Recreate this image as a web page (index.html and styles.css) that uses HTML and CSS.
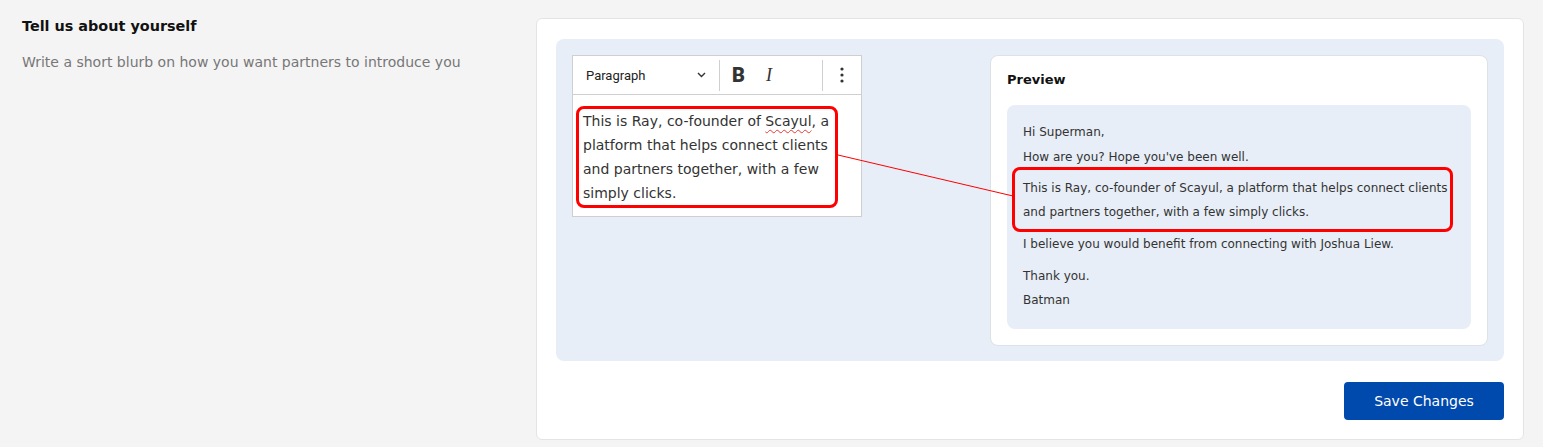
FILE: index.html
```html
<!DOCTYPE html>
<html lang="en">
<head>
<meta charset="UTF-8">
<meta name="viewport" content="width=device-width, initial-scale=1.0">
<title>Profile - Introduction</title>

<!-- CSS Styling -->
<link rel="stylesheet" href="styles.css">
</head>
<body class="profile">

<div class="page">

    <!-- Section description -->
    <div class="intro">
        <h2 class="intro-title">Tell us about yourself</h2>
        <p class="intro-text">Write a short blurb on how you want partners to introduce you</p>
    </div>

    <div class="card">
        <div class="panel">

            <!-- Rich text editor -->
            <div class="editor">
                <div class="toolbar">
                    <div class="tb-select">
                        <span>Paragraph</span>
                        <svg width="9" height="6" viewBox="0 0 9 6"><path d="M1 1l3.5 3.5L8 1" fill="none" stroke="#333" stroke-width="1.4"/></svg>
                    </div>
                    <div class="tb-sep"></div>
                    <div class="tb-format">
                        <span class="tb-bold">B</span>
                        <span class="tb-italic">I</span>
                    </div>
                    <div class="tb-sep"></div>
                    <div class="tb-more">
                        <svg width="4" height="16" viewBox="0 0 4 16"><circle cx="2" cy="2" r="1.6" fill="#333"/><circle cx="2" cy="8" r="1.6" fill="#333"/><circle cx="2" cy="14" r="1.6" fill="#333"/></svg>
                    </div>
                </div>
                <div class="editor-body">
                    <div class="mark mark-editor">This is Ray, co-founder of <span class="spell">Scayul</span>, a<br>platform that helps connect clients<br>and partners together, with a few<br>simply clicks.</div>
                </div>
            </div>

            <!-- Email preview -->
            <div class="preview">
                <h3 class="preview-title">Preview</h3>
                <div class="preview-body">
                    <p class="pv-line">Hi Superman,</p>
                    <p class="pv-line pv-gap1">How are you? Hope you've been well.</p>
                    <div class="mark mark-preview">This is Ray, co-founder of Scayul, a platform that helps connect clients<br>and partners together, with a few simply clicks.</div>
                    <p class="pv-line">I believe you would benefit from connecting with Joshua Liew.</p>
                    <p class="pv-line pv-gap8">Thank you.<br>Batman</p>
                </div>
            </div>

            <!-- annotation line between the two marked blocks -->
            <svg class="connector" width="948" height="322"><line x1="282" y1="116" x2="457" y2="157" stroke="#f00" stroke-width="1"/></svg>
        </div>

        <div class="actions">
            <button class="btn-save">Save Changes</button>
        </div>
    </div>

</div>

</body>
</html>
```
FILE: styles.css
```css
* {
    box-sizing: border-box;
}

body.profile {
    margin: 0;
    background: #f4f4f4;
    font-family: "DejaVu Sans", sans-serif;
    color: #333;
}

.page {
    display: flex;
    align-items: flex-start;
}

/* left description column */
.intro {
    width: 536px;
    flex: none;
    padding: 16px 22px;
}

.intro-title {
    margin: 0;
    font-size: 14.4px;
    line-height: 20px;
    font-weight: 700;
    color: #111;
}

.intro-text {
    margin: 16px 0 0;
    font-size: 14px;
    line-height: 20px;
    color: #777;
}

/* right card */
.card {
    width: 988px;
    flex: none;
    margin-top: 18px;
    background: #fff;
    border: 1px solid #e4e4e4;
    border-radius: 6px;
    padding: 20px 19px 19px;
}

.panel {
    position: relative;
    display: flex;
    justify-content: space-between;
    align-items: flex-start;
    background: #e8eef7;
    border-radius: 8px;
    padding: 16px 16px 15px;
}

.connector {
    position: absolute;
    left: 0;
    top: 0;
    pointer-events: none;
    overflow: visible;
}

/* editor */
.editor {
    width: 290px;
    background: #fff;
    border: 1px solid #cfcfcf;
}

.toolbar {
    display: flex;
    align-items: center;
    height: 39px;
    border-bottom: 1px solid #cfcfcf;
}

.tb-select {
    width: 146px;
    display: flex;
    align-items: center;
    justify-content: space-between;
    padding: 0 13px 0 13px;
    font-family: Roboto, sans-serif;
    font-size: 13px;
    color: #222;
}

.tb-sep {
    width: 1px;
    height: 31px;
    background: #cfcfcf;
}

.tb-format {
    width: 102px;
    display: flex;
    align-items: center;
    padding-left: 12px;
    gap: 21px;
}

.tb-bold {
    font-family: Roboto, sans-serif;
    font-weight: 900;
    font-size: 20px;
    color: #333;
}

.tb-italic {
    font-family: "Liberation Serif", serif;
    font-style: italic;
    font-size: 18px;
    color: #333;
}

.tb-more {
    flex: 1;
    display: flex;
    justify-content: center;
}

.tb-more svg {
    display: block;
}

.editor-body {
    padding: 11px 0 8px 3px;
}

/* red annotation frames */
.mark {
    border: 3px solid #f00;
    border-radius: 8px;
    white-space: nowrap;
}

.mark-editor {
    width: 262px;
    padding: 0 4px;
    font-size: 14px;
    line-height: 24px;
}

.spell {
    text-decoration: underline wavy #e53935;
    text-decoration-thickness: 1px;
    text-underline-offset: 3px;
}

/* preview */
.preview {
    width: 498px;
    background: #fff;
    border: 1px solid #dde2e8;
    border-radius: 8px;
    padding: 14px 16px 16px;
}

.preview-title {
    margin: 0 0 15px;
    font-size: 13px;
    line-height: 20px;
    font-weight: 700;
    color: #111;
}

.preview-body {
    background: #e8eef7;
    border-radius: 8px;
    padding: 15px 16px 17px;
    font-size: 12px;
    line-height: 24px;
}

.pv-line {
    margin: 0;
}

.pv-gap1 {
    margin-top: 1px;
}

.pv-gap8 {
    margin-top: 8px;
}

.mark-preview {
    width: 441px;
    margin: -2px 0 0 -11px;
    padding: 6px 8px 5px;
}

/* footer button */
.actions {
    display: flex;
    justify-content: flex-end;
    margin-top: 21px;
}

.btn-save {
    width: 160px;
    height: 38px;
    border: none;
    border-radius: 4px;
    background: #0049ad;
    color: #fff;
    font-family: "DejaVu Sans", sans-serif;
    font-size: 14px;
    cursor: pointer;
}
```
